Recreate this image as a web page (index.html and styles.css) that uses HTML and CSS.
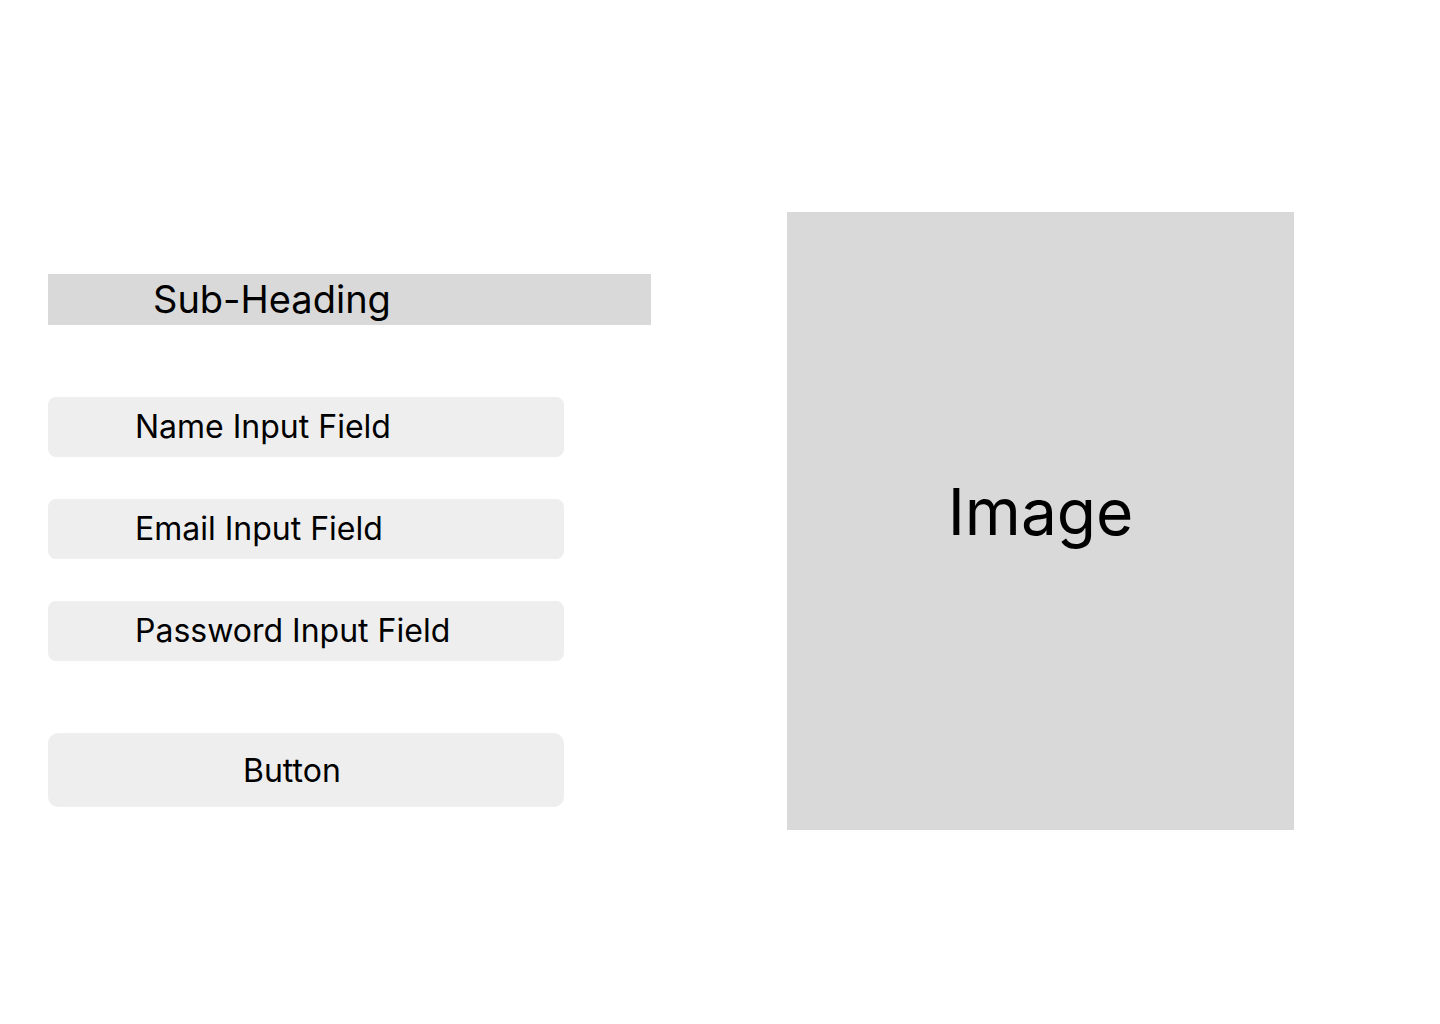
FILE: index.html
```html
<!DOCTYPE html>
<html>
<head>
<meta charset="utf-8">
<link rel="stylesheet" href="styles.css">
</head>
<body>
<div class="page">
  <div class="form-col">
    <div class="subheading">Sub-Heading</div>
    <div class="fields">
      <div class="field">Name Input Field</div>
      <div class="field">Email Input Field</div>
      <div class="field">Password Input Field</div>
    </div>
    <div class="button">Button</div>
  </div>
  <div class="image">Image</div>
</div>
</body>
</html>
```

FILE: styles.css
```css
html, body {
  margin: 0;
  padding: 0;
  background: #ffffff;
  font-family: Inter, "Noto Sans", sans-serif;
  color: #000;
}
.page {
  display: flex;
  align-items: flex-start;
  padding: 212px 0 0 48px;
  gap: 136px;
}
.form-col {
  width: 603px;
  padding-top: 62px;
  display: flex;
  flex-direction: column;
}
.subheading {
  height: 51px;
  background: #d9d9d9;
  font-size: 38px;
  line-height: 51px;
  padding-left: 105px;
}
.fields {
  margin-top: 72px;
  width: 516px;
  display: flex;
  flex-direction: column;
  gap: 42px;
}
.field {
  height: 60px;
  background: #eeeeee;
  border-radius: 8px;
  font-size: 32px;
  line-height: 60px;
  padding-left: 87px;
}
.button {
  margin-top: 72px;
  width: 516px;
  height: 74px;
  background: #eeeeee;
  border-radius: 10px;
  font-size: 32px;
  line-height: 76px;
  padding-left: 195px;
  box-sizing: border-box;
}
.image {
  width: 507px;
  height: 618px;
  padding-bottom: 19px;
  box-sizing: border-box;
  background: #d9d9d9;
  display: flex;
  align-items: center;
  justify-content: center;
  font-size: 64px;
}
```
